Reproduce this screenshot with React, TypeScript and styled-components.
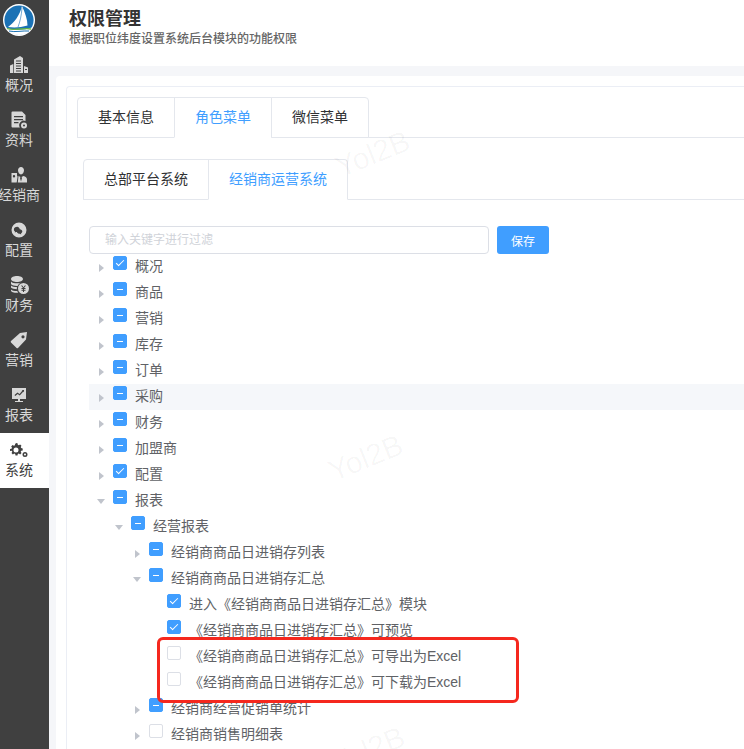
import React from 'react'
import styled, { createGlobalStyle } from 'styled-components'

const GlobalStyle = createGlobalStyle`
    html, body {
        margin: 0;
        height: 749px;
        overflow: hidden;
        background: #fff;
        font-family: "Liberation Sans", "Noto Sans CJK SC", sans-serif;
    }
    * { box-sizing: border-box; }
`

const Page = styled.div`
    position: relative;
    display: flex;
    width: 744px;
    height: 749px;
    overflow: hidden;
`

const Sidebar = styled.aside`
    flex: 0 0 49px;
    width: 49px;
    min-width: 0;
    background: #404040;
`

const LogoBox = styled.div`
    height: 48px;
    padding: 4px 0 0 3px;
`

const NavItem = styled.div<{ $active?: boolean }>`
    width: 49px;
    height: 55px;
    padding: 7px 11px 0 0;
    display: flex;
    flex-direction: column;
    align-items: center;
    background: ${p => (p.$active ? '#fff' : 'transparent')};
    color: ${p => (p.$active ? '#404040' : '#d8d8d8')};
`

const NavIcon = styled.svg`
    width: 20px;
    height: 20px;
    flex: none;
    fill: currentColor;
`

const NavLabel = styled.span`
    font-size: 14px;
    line-height: 20px;
    white-space: nowrap;
`

const Main = styled.main`
    flex: 1;
    min-width: 0;
    display: flex;
    flex-direction: column;
`

const Header = styled.header`
    height: 66px;
    flex: none;
    padding: 7px 0 0 20px;
    background: #fff;
`

const Title = styled.h1`
    margin: 0;
    font-size: 18px;
    line-height: 24px;
    font-weight: 600;
    color: #333;
`

const Subtitle = styled.p`
    margin: 0;
    font-size: 12px;
    line-height: 16px;
    font-weight: 500;
    color: #666;
`

const Content = styled.div`
    flex: 1;
    padding: 10px 0 0 7px;
    background: #f5f6f9;
`

const Card = styled.section`
    height: 100%;
    padding: 10px 0 0 10px;
    background: #fff;
    border-radius: 4px 0 0 0;
`

const InnerCard = styled.div`
    height: 100%;
    padding: 10px 0 0 10px;
    border: 1px solid #ebeef5;
    border-width: 1px 0 0 1px;
    border-radius: 4px 0 0 0;
`

const TabBar = styled.div<{ $inner?: boolean }>`
    display: flex;
    height: 41px;
    margin-left: ${p => (p.$inner ? '6px' : '0')};
    margin-bottom: ${p => (p.$inner ? '26px' : '21px')};
    border-bottom: 1px solid #e4e7ed;
`

const Tab = styled.div<{ $active?: boolean }>`
    height: 41px;
    padding: 0 20px;
    line-height: 39px;
    font-size: 14px;
    color: ${p => (p.$active ? '#409eff' : '#303133')};
    background: #fff;
    border: 1px solid #e4e7ed;
    border-bottom-color: ${p => (p.$active ? '#fff' : '#e4e7ed')};
    margin-left: -1px;
    &:first-child {
        margin-left: 0;
        border-top-left-radius: 4px;
    }
    &:last-child {
        border-top-right-radius: 4px;
    }
`

const FilterRow = styled.div`
    display: flex;
    gap: 8px;
    margin-left: 12px;
    height: 28px;
`

const FilterInput = styled.input`
    width: 400px;
    height: 28px;
    padding: 0 15px;
    border: 1px solid #dcdfe6;
    border-radius: 4px;
    font: inherit;
    font-size: 12px;
    outline: none;
    &::placeholder {
        color: #d0d3d9;
    }
`

const SaveButton = styled.button`
    width: 52px;
    height: 28px;
    padding: 0;
    border: none;
    border-radius: 3px;
    background: #409eff;
    color: #fff;
    font: inherit;
    font-size: 12px;
`

const Tree = styled.div`
    margin-left: 12px;
`

const Row = styled.div<{ $level: number; $hover?: boolean }>`
    display: flex;
    align-items: center;
    height: 26px;
    padding-left: ${p => p.$level * 18}px;
    background: ${p => (p.$hover ? '#f5f7fa' : 'transparent')};
    font-size: 14px;
    color: #606266;
    white-space: nowrap;
`

const RowLabel = styled.span`
    margin-bottom: 4px;
`

const Caret = styled.span<{ $state: 'open' | 'closed' | 'leaf' }>`
    flex: 0 0 24px;
    display: flex;
    justify-content: center;
    margin-top: 1px;
    &::before {
        content: '';
        visibility: ${p => (p.$state === 'leaf' ? 'hidden' : 'visible')};
        border-style: solid;
        border-color: transparent;
        border-width: ${p => (p.$state === 'open' ? '5px 4px 0 4px' : '4px 0 4px 5px')};
        border-top-color: ${p => (p.$state === 'open' ? '#c0c4cc' : 'transparent')};
        border-left-color: ${p => (p.$state === 'closed' ? '#c0c4cc' : 'transparent')};
    }
`

const Box = styled.span<{ $state: Check }>`
    flex: 0 0 14px;
    width: 14px;
    height: 14px;
    margin: 0 8px 8px 0;
    border-radius: 2px;
    display: flex;
    align-items: center;
    justify-content: center;
    background: ${p => (p.$state === 'none' ? '#fff' : '#409eff')};
    border: 1px solid ${p => (p.$state === 'none' ? '#dcdfe6' : '#409eff')};
`

const Dash = styled.span`
    width: 6px;
    height: 1px;
    background: #fff;
`

const Tick = styled.span`
    width: 4px;
    height: 8px;
    margin-top: -2px;
    border: solid #fff;
    border-width: 0 1px 1px 0;
    transform: rotate(45deg);
`

const Highlight = styled.div`
    position: absolute;
    left: 157px;
    top: 637px;
    width: 362px;
    height: 66px;
    border: 3px solid #f5281e;
    border-radius: 6px;
    pointer-events: none;
`

const Watermark = styled.div<{ $x: number; $y: number }>`
    position: absolute;
    left: ${p => p.$x}px;
    top: ${p => p.$y}px;
    font-size: 30px;
    color: rgba(0, 0, 0, 0.035);
    transform: rotate(-22deg);
    pointer-events: none;
`

const LogoMark = () => (
    <svg width="32" height="32" viewBox="0 0 32 32">
        <circle cx="16" cy="16" r="16" fill="#fff" />
        <circle cx="16" cy="16" r="14.6" fill="#1b72b5" />
        <path d="M19 2C22 9 24.500 15 24.500 21.500 18 23.500 11 24 5 23 11 19 17 11 19 2Z" fill="#fff" />
        <path d="M19 4C18.500 11 17 18 15 23" fill="none" stroke="#1b72b5" strokeWidth=".6" />
        <path d="M3.200 23.500C10 27 22 26 28.800 23.500A14.600 14.600 0 0 1 3.200 23.500Z" fill="#fff" />
        <path d="M4 24.500C11 27 21 23.500 28 25" fill="none" stroke="#63b348" strokeWidth="1.300" />
        <path d="M6 27C12 28.500 20 26.500 26 27" fill="none" stroke="#1b72b5" strokeWidth="1" />
    </svg>
)

const icons: Record<string, React.ReactNode> = {
    概况: <path d="M5 4.500L11 1l3 2v15H5zM7 5.500v1h5v-1zM7 8v1h5V8zM7 10.500v1h5v-1zM7 13v1h5v-1zM7 15.500v1h5v-1zM1 10.500L4.300 9v9H1zM15 11l4 1.500V18h-4zM16 14v1h2v-1z" fillRule="evenodd" />,
    资料: <path d="M3.500 1.500H13l3.500 3.500v6a4.500 4.500 0 0 0-5.600 6.500H3.500a1 1 0 0 1-1-1v-14a1 1 0 0 1 1-1zM5 6v1.300h9V6zM5 9v1.300h9V9zM5 12v1.300h4.500V12zM15 12.500a3 3 0 1 1 0 6 3 3 0 0 1 0-6zm0 2a1 1 0 1 0 0 2 1 1 0 0 0 0-2z" fillRule="evenodd" />,
    经销商: <path d="M12 2c1.700 0 3 1.300 3 3.300C15 7.500 13.600 9.500 12 9.500S9 7.500 9 5.300C9 3.300 10.300 2 12 2zM2.500 8H8v2.500l.6 1.200-.9 5.800H2.500zm2.500 2a1.200 1.200 0 1 0 0 2.400A1.200 1.200 0 0 0 5 10zM9.500 11l2 1-.5 1 1 3.500 1-3.500-.5-1 2-1c2 .5 3.500 1.500 3.500 3.500v3H8.800z" fillRule="evenodd" />,
    配置: <path d="M10 2.500a7.500 7.500 0 1 1 0 15 7.500 7.500 0 0 1 0-15zM8.300 6.800c-2 0-3.400 1.200-3.400 2.600 0 .9.500 1.600 1.200 2.100l-.3 1.100 1.400-.7h.6c.4 1.100 1.600 1.800 3 1.800l1.400.7-.2-1c.8-.5 1.300-1.200 1.300-2 0-1.200-1.100-2.100-2.500-2.200-.3-1.400-1.500-2.400-2.500-2.400z" fillRule="evenodd" />,
    财务: <path d="M2 4c0-1.700 3-3 6-3s6 1.300 6 3-3 3-6 3-6-1.300-6-3zm0 2.500C3 8 5.500 8.300 8 8.300c1.500 0 3-.2 4-.6a6 6 0 0 0-3.500 3.200H8c-2.500 0-5-.5-6-1.900zm0 4c1 1.200 3.500 1.600 6 1.600-.2.800-.2 1.300-.1 2.100-2.500 0-5-.5-5.900-1.700zm0 4c1 1 3.200 1.500 6.200 1.500l1 1.800c-3.500.2-7.200-.6-7.200-2.300zM14.500 8a5.500 5.500 0 1 1 0 11 5.500 5.500 0 0 1 0-11zM12 10.500l2 2.500h-1.500v1H14v.7h-1.500v1H14V17h1v-1.300h1.500v-1H15V14h1.500v-1H15l2-2.500h-1.200L14.500 12.300 13.200 10.500z" fillRule="evenodd" />,
    营销: <path d="M11 3l7-1-1 7.500-8 8.500a1 1 0 0 1-1.400 0L2 12.400a1 1 0 0 1 0-1.400zm3 2.200a1.600 1.600 0 1 0 0 3.200 1.600 1.600 0 0 0 0-3.200z" fillRule="evenodd" />,
    报表: <path d="M3 3h14v11h-6v2h3v1H6v-1h3v-2H3zm2.500 7l3-2.500 2 1.500 3-3.500-.8-.5h2.300v2.300l-.6-.9-3.700 4-2-1.500-2.500 2z" fillRule="evenodd" />,
    系统: <path d="M7.500 3l1 .2.300 1.500 1 .5 1.300-.8 1.400 1.400-.8 1.300.5 1 1.500.3v2l-1.500.3-.5 1 .8 1.300-1.400 1.400-1.300-.8-1 .5-.3 1.500h-2l-.3-1.500-1-.5-1.300.8-1.400-1.400.8-1.300-.5-1L1 11V9l1.500-.3.5-1-.8-1.300 1.400-1.400 1.300.8 1-.5.300-1.500zm-.5 4.500a2.500 2.500 0 1 0 0 5 2.500 2.500 0 0 0 0-5zM16 12a2.500 2.500 0 1 1 0 5 2.500 2.500 0 0 1 0-5zm0 1.500a1 1 0 1 0 0 2 1 1 0 0 0 0-2z" fillRule="evenodd" />,
}

const navItems = ['概况', '资料', '经销商', '配置', '财务', '营销', '报表', '系统']

type Check = 'checked' | 'half' | 'none'

interface Node {
    label: string
    level: number
    check: Check
    caret: 'open' | 'closed' | 'leaf'
    hover?: boolean
}

const nodes: Node[] = [
    { label: '概况', level: 0, check: 'checked', caret: 'closed' },
    { label: '商品', level: 0, check: 'half', caret: 'closed' },
    { label: '营销', level: 0, check: 'half', caret: 'closed' },
    { label: '库存', level: 0, check: 'half', caret: 'closed' },
    { label: '订单', level: 0, check: 'half', caret: 'closed' },
    { label: '采购', level: 0, check: 'half', caret: 'closed', hover: true },
    { label: '财务', level: 0, check: 'half', caret: 'closed' },
    { label: '加盟商', level: 0, check: 'half', caret: 'closed' },
    { label: '配置', level: 0, check: 'checked', caret: 'closed' },
    { label: '报表', level: 0, check: 'half', caret: 'open' },
    { label: '经营报表', level: 1, check: 'half', caret: 'open' },
    { label: '经销商商品日进销存列表', level: 2, check: 'half', caret: 'closed' },
    { label: '经销商商品日进销存汇总', level: 2, check: 'half', caret: 'open' },
    { label: '进入《经销商商品日进销存汇总》模块', level: 3, check: 'checked', caret: 'leaf' },
    { label: '《经销商商品日进销存汇总》可预览', level: 3, check: 'checked', caret: 'leaf' },
    { label: '《经销商商品日进销存汇总》可导出为Excel', level: 3, check: 'none', caret: 'leaf' },
    { label: '《经销商商品日进销存汇总》可下载为Excel', level: 3, check: 'none', caret: 'leaf' },
    { label: '经销商经营促销单统计', level: 2, check: 'half', caret: 'closed' },
    { label: '经销商销售明细表', level: 2, check: 'none', caret: 'closed' },
]

export default function App() {
    return (
        <Page>
            <GlobalStyle />
            <Sidebar>
                <LogoBox>
                    <LogoMark />
                </LogoBox>
                {navItems.map(name => (
                    <NavItem key={name} $active={name === '系统'}>
                        <NavIcon viewBox="0 0 20 20">{icons[name]}</NavIcon>
                        <NavLabel>{name}</NavLabel>
                    </NavItem>
                ))}
            </Sidebar>
            <Main>
                <Header>
                    <Title>权限管理</Title>
                    <Subtitle>根据职位纬度设置系统后台模块的功能权限</Subtitle>
                </Header>
                <Content>
                    <Card>
                        <InnerCard>
                            <TabBar>
                                <Tab>基本信息</Tab>
                                <Tab $active>角色菜单</Tab>
                                <Tab>微信菜单</Tab>
                            </TabBar>
                            <TabBar $inner>
                                <Tab>总部平台系统</Tab>
                                <Tab $active>经销商运营系统</Tab>
                            </TabBar>
                            <FilterRow>
                                <FilterInput placeholder="输入关键字进行过滤" />
                                <SaveButton>保存</SaveButton>
                            </FilterRow>
                            <Tree>
                                {nodes.map(node => (
                                    <Row key={node.label} $level={node.level} $hover={node.hover}>
                                        <Caret $state={node.caret} />
                                        <Box $state={node.check}>
                                            {node.check === 'half' && <Dash />}
                                            {node.check === 'checked' && <Tick />}
                                        </Box>
                                        <RowLabel>{node.label}</RowLabel>
                                    </Row>
                                ))}
                            </Tree>
                        </InnerCard>
                    </Card>
                </Content>
            </Main>
            <Highlight />
            <Watermark $x={334} $y={137}>Yol2B</Watermark>
            <Watermark $x={327} $y={441}>Yol2B</Watermark>
            <Watermark $x={329} $y={733}>Yol2B</Watermark>
        </Page>
    )
}
